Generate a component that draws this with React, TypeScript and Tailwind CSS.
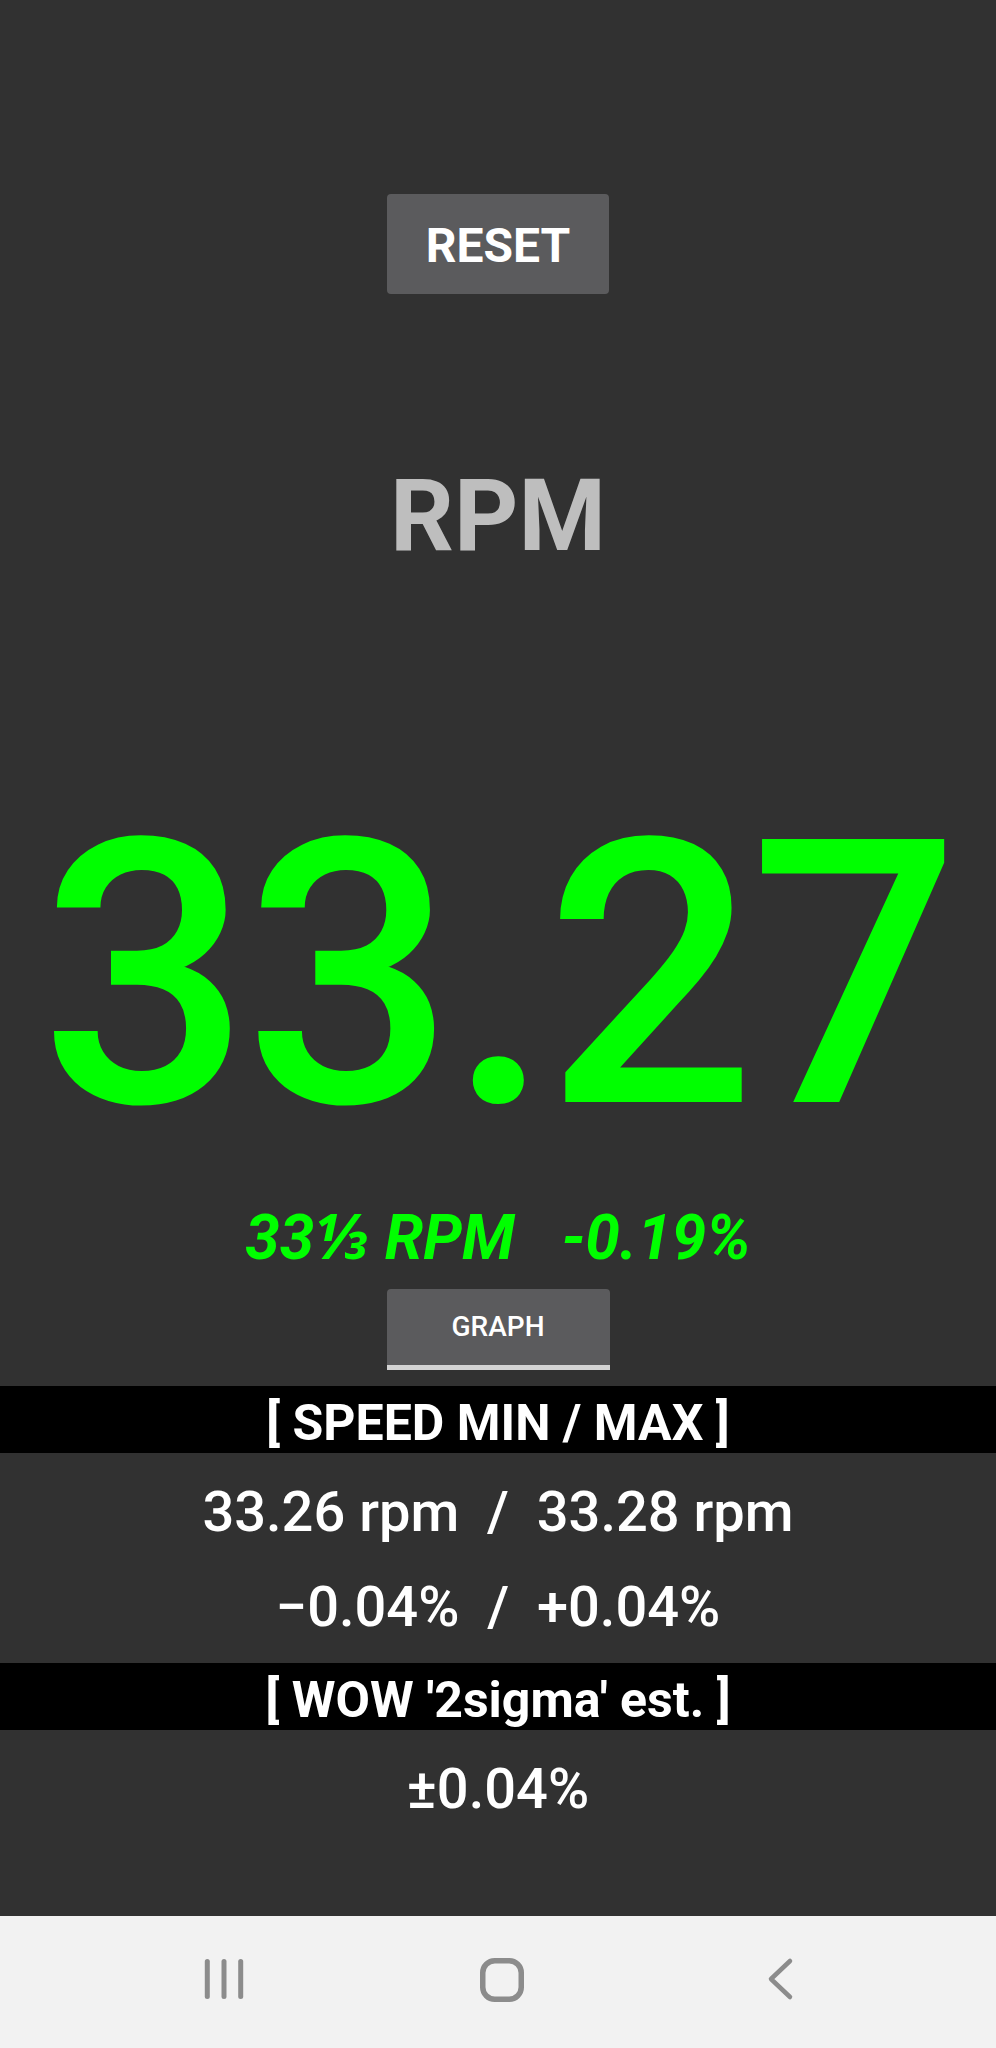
import React from 'react'

const font = { fontFamily: 'Roboto, "Noto Sans", sans-serif' }

function RecentsIcon() {
  return (
    <svg width="60" height="60" viewBox="0 0 60 60" fill="none" stroke="#8c8c8c" strokeWidth="5" strokeLinecap="round">
      <line x1="13.3" y1="12.5" x2="13.3" y2="47.5" />
      <line x1="30" y1="12.5" x2="30" y2="47.5" />
      <line x1="46.7" y1="12.5" x2="46.7" y2="47.5" />
    </svg>
  )
}

function HomeIcon() {
  return (
    <svg width="60" height="60" viewBox="0 0 60 60" fill="none" stroke="#8c8c8c" strokeWidth="5.5">
      <rect x="10.75" y="11.75" width="38.5" height="38.5" rx="12" />
    </svg>
  )
}

function BackIcon() {
  return (
    <svg width="60" height="60" viewBox="0 0 60 60" fill="none" stroke="#8c8c8c" strokeWidth="4.5" strokeLinecap="round" strokeLinejoin="round">
      <polyline points="40,12 21,30 40,48" />
    </svg>
  )
}

function SectionHeader({ children }: { children: React.ReactNode }) {
  return (
    <div className="flex h-[67px] items-center justify-center bg-black pt-[6px] text-[50px] font-bold leading-none text-white">
      {children}
    </div>
  )
}

export default function App() {
  return (
    <div className="flex h-[2048px] w-[996px] flex-col bg-[#313131]" style={font}>
      <div className="flex flex-1 flex-col items-center">
        {/* reset */}
        <button className="mt-[194px] flex h-[100px] w-[222px] items-center justify-center rounded-[4px] bg-[#5b5b5d] pt-[3px] text-[48px] font-bold leading-none text-white">
          RESET
        </button>

        <div className="mt-[172px] text-[100px] font-bold leading-none text-[#bebebe]">RPM</div>

        {/* live speed */}
        <div className="mt-[225px] pr-[2px] text-[370px] font-medium leading-none tracking-[-6px] text-[#00ff00]">33.27</div>

        <div className="mt-[46px] flex gap-[47px] text-[62px] font-bold italic leading-none text-[#00ff00]">
          <span>33⅓ RPM</span>
          <span>-0.19%</span>
        </div>

        <div className="mt-[20px] flex h-[81px] w-[223px] items-center justify-center rounded-t-[4px] border-b-[5px] border-[#d4d4d4] bg-[#5b5b5d] text-[28px] font-medium leading-none text-white">
          GRAPH
        </div>
      </div>

      <div className="mt-[16px]">
        <SectionHeader>[ SPEED MIN / MAX ]</SectionHeader>
        <div className="flex h-[210px] flex-col items-center pt-[31px] text-[56px] font-medium leading-none text-white">
          <div className="whitespace-pre">33.26 rpm  /  33.28 rpm</div>
          <div className="mt-[39px] whitespace-pre">−0.04%  /  +0.04%</div>
        </div>
        <SectionHeader>[ WOW '2sigma' est. ]</SectionHeader>
        <div className="flex h-[186px] flex-col items-center pt-[31px] text-[56px] font-medium leading-none text-white">
          <div>±0.04%</div>
        </div>
      </div>

      {/* system nav */}
      <div className="flex h-[133px] bg-[#f2f2f2] pl-[194px] pt-[33px]">
        <div className="flex gap-[218px]">
          <RecentsIcon />
          <HomeIcon />
          <BackIcon />
        </div>
      </div>
    </div>
  )
}
